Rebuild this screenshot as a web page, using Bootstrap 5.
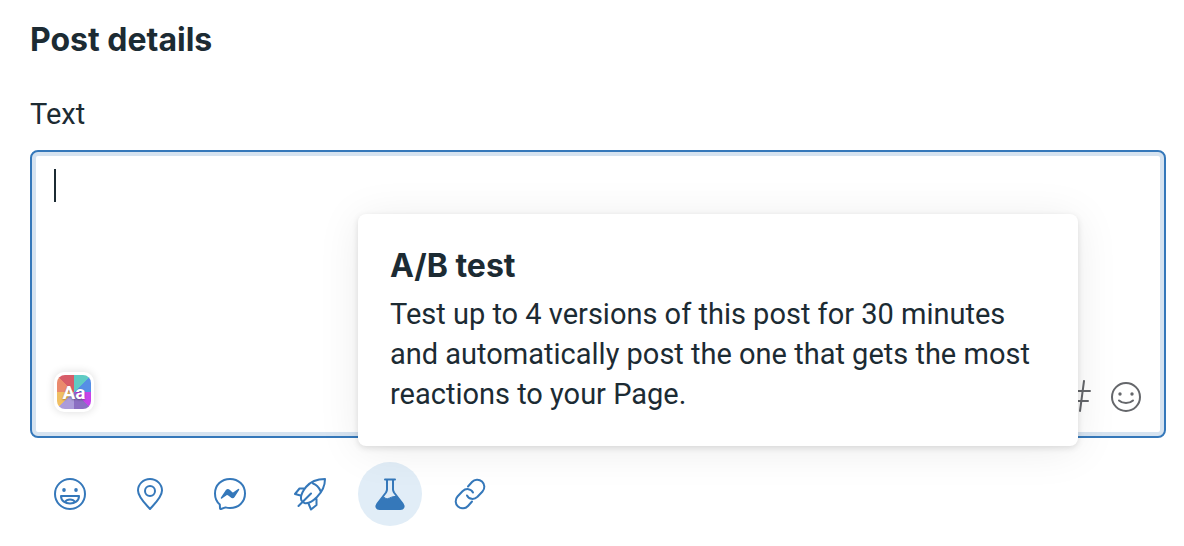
<!DOCTYPE html>
<html lang="en">
<head>
<meta charset="utf-8">
<meta name="viewport" content="width=device-width, initial-scale=1">
<title>Post details</title>
<link href="https://cdn.jsdelivr.net/npm/bootstrap@5.3.0/dist/css/bootstrap.min.css" rel="stylesheet">
<style>
  :root { --ink: #1c2b33; --accent: #3578ba; --ring: #d6e3f0; --glyph: #65676b; }
  body { font-family: Roboto, "Liberation Sans", sans-serif; font-size: 29px; line-height: 40px; color: var(--ink); background: #fff; }
  .composer { padding: 20px 18px 20px 30px; }
  .heading { font-family: Inter, "Liberation Sans", sans-serif; font-size: 32px; line-height: 40px; font-weight: 700; margin: 0; }
  .page-heading { margin-bottom: 34px; }
  .editor { border: 2px solid var(--accent); border-radius: 8px; box-shadow: inset 0 0 0 4px var(--ring); padding: 16px 22px 24px; }
  .editor textarea { line-height: 36px; height: 204px; resize: none; outline: 0; color: var(--ink); caret-color: transparent; }
  .caret { top: 17px; left: 22px; width: 2px; height: 33px; background: var(--ink); }
  .icon-btn { border: 0; background: none; padding: 0; display: flex; align-items: center; justify-content: center; }
  .backdrop-btn { width: 40px; height: 40px; padding: 3px; border-radius: 10px; background: #fff; box-shadow: 0 0 8px rgba(0,0,0,.14); }
  .swatch { width: 34px; height: 34px; border-radius: 8px;
    background: conic-gradient(#5fcbc4 0 45deg, #568fe6 45deg 90deg, #c544ea 90deg 135deg, #8b6fc2 135deg 180deg, #ac9cda 180deg 225deg, #f0bf63 225deg 270deg, #ea8a6c 270deg 315deg, #d75c68 315deg);
    color: #fff; font-size: 19px; line-height: 35px; font-weight: 700; text-align: center; text-shadow: 0 1px 2px rgba(0,0,0,.35); }
  .glyph-btn { width: 32px; height: 32px; color: var(--glyph); }
  .tool { width: 64px; height: 64px; border-radius: 50%; color: var(--accent); }
  .tool.active { background: #e1edf7; }
  .tip { left: 0; bottom: 80px; width: 720px; max-width: 80vw; padding: 32px; background: #fff; border-radius: 8px; z-index: 10;
    box-shadow: 0 2px 6px rgba(0,0,0,.12), 0 4px 44px rgba(0,0,0,.08); }
  svg { fill: none; stroke: currentColor; stroke-width: 2; stroke-linecap: round; stroke-linejoin: round; display: block; }
</style>
</head>
<body>
<main class="composer">
  <h1 class="heading page-heading">Post details</h1>
  <label for="post-text" class="d-block mb-3">Text</label>
  <div class="editor position-relative">
    <textarea id="post-text" class="d-block w-100 border-0 p-0 bg-transparent shadow-none"></textarea>
    <span class="caret position-absolute" aria-hidden="true"></span>
    <div class="d-flex align-items-end justify-content-between">
      <button type="button" class="icon-btn backdrop-btn"><span class="swatch">Aa</span></button>
      <div class="d-flex gap-3">
        <button type="button" class="icon-btn glyph-btn" aria-label="Add hashtag">
          <svg width="32" height="32" viewBox="0 0 32 32"><path d="M12 1 9 31M22 1l-4 30M2 11h26M0 21h26"/></svg>
        </button>
        <button type="button" class="icon-btn glyph-btn" aria-label="Add emoji">
          <svg width="32" height="32" viewBox="0 0 32 32"><circle cx="16" cy="17" r="14"/><path d="M9 20.500c3.500 3.300 10.500 3.300 14 0"/><g fill="currentColor" stroke="none"><circle cx="10" cy="14" r="1.700"/><circle cx="22" cy="14" r="1.700"/></g></svg>
        </button>
      </div>
    </div>
  </div>
  <div class="d-flex gap-3 ps-2 mt-4">
    <button type="button" class="icon-btn tool" aria-label="Feeling or activity">
      <svg width="34" height="34" viewBox="0 0 34 34"><circle cx="17" cy="17" r="15"/><path d="M8 19h18c0 10-18 10-18 0ZM12 25c2-3.500 8-3.500 10 0"/><g fill="currentColor" stroke="none"><ellipse cx="11" cy="13" rx="1.800" ry="2"/><ellipse cx="23" cy="13" rx="1.800" ry="2"/></g></svg>
    </button>
    <button type="button" class="icon-btn tool" aria-label="Location">
      <svg width="34" height="34" viewBox="0 0 34 34"><path d="M17 32C12 26.500 5 20 5 13.500a12 11.500 0 0 1 24 0C29 20 22 26.500 17 32Z"/><circle cx="17" cy="14" r="5"/></svg>
    </button>
    <button type="button" class="icon-btn tool" aria-label="Get messages">
      <svg width="34" height="34" viewBox="0 0 34 34"><path d="M17 2C25.500 2 32 8 32 16.500S25.500 31 17 31c-1.500 0-3-.200-4.500-.600L8 32c-.700.200-1-.200-1-1l-.200-3.500C3.700 25 2 21 2 16.500 2 8 8.500 2 17 2Z"/><path d="m8.500 21 5-7.500q1.200-1.500 3 0l2.500 2.500q.800.500 1.500 0l5-3.500-4.500 7q-1.200 1.700-3 .200L15 17.500q-.800-.500-1.500 0Z" fill="currentColor" stroke-width="1.500"/></svg>
    </button>
    <button type="button" class="icon-btn tool" aria-label="Boost">
      <svg width="34" height="34" viewBox="0 0 34 34"><path d="M32 2C24 2 18 4 13 10 9 15 7 20 8.500 23.500c.500 1.500 1.500 2 3 2.500C16 27 20 24 24 20c6-6 8-11 8-18ZM20 6.500c3 1 6 4 7.500 7.500M18 16.500 5.500 29M12 11.500H6.500L2 17l5.500 1.500M23.500 21.500V28L18 32.500l-2.500-6"/></svg>
    </button>
    <div class="position-relative">
      <button type="button" class="icon-btn tool active" aria-label="A/B test" aria-describedby="ab-tip">
        <svg width="34" height="34" viewBox="0 0 34 34"><path d="M12 2.500h10M14 3v9.500c0 1-.500 2-1 3L4.500 26.500C2.500 29.500 3.500 32 6.500 32h21c3 0 4-2.500 2-5.500L21 15.500c-.500-1-1-2-1-3V3"/><path d="M9 21 4.500 27c-1.500 2.500-.500 4.500 2 4.500h21c2.500 0 3.500-2 2-4.500l-6-7.500c-4-.500-6 1.500-9 2.200-2.500.600-2.500-2-4-1.500Z" fill="currentColor" stroke-width="1"/></svg>
      </button>
      <div id="ab-tip" role="tooltip" class="tip position-absolute">
        <h2 class="heading mb-2">A/B test</h2>
        <p class="mb-0">Test up to 4 versions of this post for 30 minutes and automatically post the one that gets the most reactions to your Page.</p>
      </div>
    </div>
    <button type="button" class="icon-btn tool" aria-label="Add link">
      <svg width="34" height="34" viewBox="0 0 34 34"><path d="M15 9.500l4-4.500A6.800 6.800 0 0 1 29.500 14.500L24.500 19.800C21 23 16 22.500 14 18.500M19 24.500l-4 4.500A6.800 6.800 0 0 1 4.500 19.500L9.500 14.200C13 11 18 11.500 20 15.500"/></svg>
    </button>
  </div>
</main>
<script src="https://cdn.jsdelivr.net/npm/bootstrap@5.3.0/dist/js/bootstrap.bundle.min.js"></script>
</body>
</html>
